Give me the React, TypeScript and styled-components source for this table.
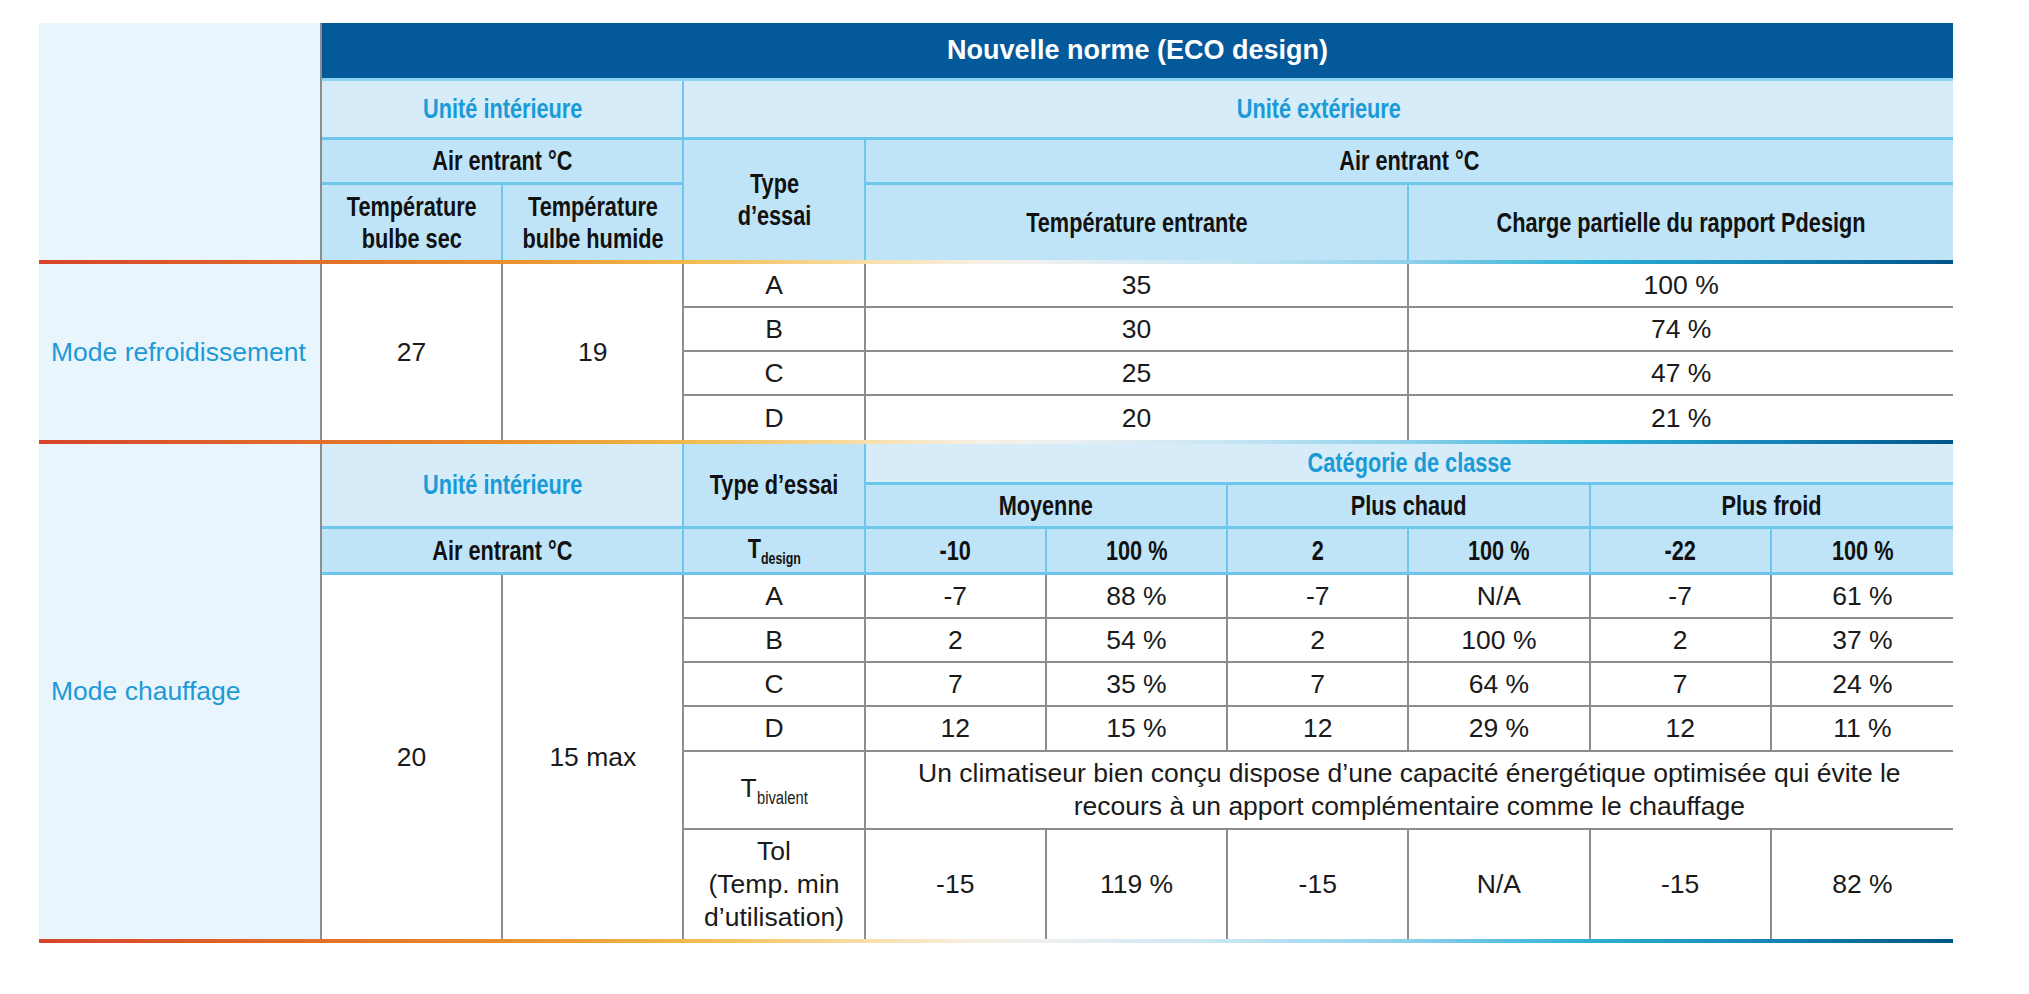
import React from "react";
import styled, { createGlobalStyle, css } from "styled-components";

const SANS = `"Liberation Sans", Arial, Helvetica, sans-serif`;

const HEAD_LINE = "#6ec6ec";
const GRID_LINE = "#8d8d8d";

const GlobalStyle = createGlobalStyle`
  html, body {
    margin: 0;
    padding: 0;
    background: #ffffff;
  }
  body {
    font-family: ${SANS};
  }
`;

const Page = styled.div`
  padding: 23px 0 0 39px;
`;

const Grid = styled.div`
  display: grid;
  width: 1914px;
  grid-template-columns: 283px repeat(9, 1fr);
  grid-template-rows:
    58px 59px 45px 75px 4px
    repeat(4, 44px) 4px
    41px 44px 46px repeat(3, 44px) 45px 78px 109px 4px;
`;

interface PlaceProps {
  $col: string;
  $row: string;
  $nr?: boolean;
  $nb?: boolean;
}

const placed = css<PlaceProps>`
  grid-column: ${(p) => p.$col};
  grid-row: ${(p) => p.$row};
  box-sizing: border-box;
  display: flex;
  align-items: center;
  justify-content: center;
  text-align: center;
  min-width: 0;
`;

const TitleCell = styled.div<PlaceProps>`
  ${placed};
  background: #04599a;
  border-bottom: 3px solid #8fd5f3;
  color: #ffffff;
  font-family: ${SANS};
  font-weight: 700;
  font-size: 27px;
`;

const HeadCell = styled.div<PlaceProps & { $light?: boolean; $blue?: boolean }>`
  ${placed};
  background: ${(p) => (p.$light ? "#d6ecf9" : "#bfe4f7")};
  color: ${(p) => (p.$blue ? "#1a9ad7" : "#111111")};
  border-right: ${(p) => (p.$nr ? "none" : `2px solid ${HEAD_LINE}`)};
  border-bottom: ${(p) => (p.$nb ? "none" : `3px solid ${HEAD_LINE}`)};
  font-family: ${SANS};
  font-weight: 700;
  font-size: 28px;
  line-height: 32px;
`;

/* the source uses a condensed Helvetica; no narrow face is installed, so squeeze it */
const Condensed = styled.span`
  display: inline-block;
  white-space: nowrap;
  transform: scaleX(0.775);
`;

const SideCell = styled.div<PlaceProps>`
  ${placed};
  justify-content: flex-start;
  padding-left: 12px;
  background: #e9f5fc;
  border-right: 2px solid ${GRID_LINE};
  color: #1d9ad6;
  font-family: ${SANS};
  font-size: 26.5px;
`;

const DataCell = styled.div<PlaceProps>`
  ${placed};
  background: #ffffff;
  border-right: ${(p) => (p.$nr ? "none" : `2px solid ${GRID_LINE}`)};
  border-bottom: ${(p) => (p.$nb ? "none" : `2px solid ${GRID_LINE}`)};
  color: #1a1a1a;
  font-family: ${SANS};
  font-size: 26.5px;
  line-height: 33px;
`;

const GradientLine = styled.div<{ $row: string }>`
  grid-column: 1 / 11;
  grid-row: ${(p) => p.$row};
  background: linear-gradient(
    90deg,
    #d6442a 0%,
    #e2702a 14.8%,
    #e98f2e 24.2%,
    #f1b94c 33.7%,
    #f8dfa8 43.2%,
    #f7efe2 49%,
    #eef0f0 52.6%,
    #c6e6f4 62.1%,
    #8ed0ea 71.6%,
    #2bb0d6 81.1%,
    #1784b8 90.5%,
    #005588 100%
  );
`;

const SubBold = styled.span`
  font-size: 16px;
  position: relative;
  top: 6px;
`;

const SubNarrow = styled.span`
  display: inline-block;
  font-size: 18px;
  transform: scaleX(0.82);
  transform-origin: left center;
  margin-right: -11px;
  position: relative;
  top: 7px;
`;

type HeadProps = React.ComponentProps<typeof HeadCell>;

function Head({ children, ...rest }: HeadProps) {
  return (
    <HeadCell {...rest}>
      <Condensed>{children}</Condensed>
    </HeadCell>
  );
}

const cooling = [
  ["A", "35", "100 %"],
  ["B", "30", "74 %"],
  ["C", "25", "47 %"],
  ["D", "20", "21 %"],
];

const heating = [
  ["A", "-7", "88 %", "-7", "N/A", "-7", "61 %"],
  ["B", "2", "54 %", "2", "100 %", "2", "37 %"],
  ["C", "7", "35 %", "7", "64 %", "7", "24 %"],
  ["D", "12", "15 %", "12", "29 %", "12", "11 %"],
];

const tdesign = ["-10", "100 %", "2", "100 %", "-22", "100 %"];
const tol = ["-15", "119 %", "-15", "N/A", "-15", "82 %"];

export default function App() {
  return (
    <Page>
      <GlobalStyle />
      <Grid>
        {/* en-tête */}
        <SideCell $col="1" $row="1 / 5" />
        <TitleCell $col="2 / 11" $row="1">
          Nouvelle norme (ECO design)
        </TitleCell>
        <Head $col="2 / 4" $row="2" $light $blue>
          Unité intérieure
        </Head>
        <Head $col="4 / 11" $row="2" $light $blue $nr>
          Unité extérieure
        </Head>
        <Head $col="2 / 4" $row="3">
          Air entrant °C
        </Head>
        <Head $col="4" $row="3 / 5" $nb>
          Type
          <br />
          d’essai
        </Head>
        <Head $col="5 / 11" $row="3" $nr>
          Air entrant °C
        </Head>
        <Head $col="2" $row="4" $nb>
          Température
          <br />
          bulbe sec
        </Head>
        <Head $col="3" $row="4" $nb>
          Température
          <br />
          bulbe humide
        </Head>
        <Head $col="5 / 8" $row="4" $nb>
          Température entrante
        </Head>
        <Head $col="8 / 11" $row="4" $nb $nr>
          Charge partielle du rapport Pdesign
        </Head>
        <GradientLine $row="5" />

        {/* refroidissement */}
        <SideCell $col="1" $row="6 / 10">
          Mode refroidissement
        </SideCell>
        <DataCell $col="2" $row="6 / 10" $nb>
          27
        </DataCell>
        <DataCell $col="3" $row="6 / 10" $nb>
          19
        </DataCell>
        {cooling.map((r, i) => {
          const row = String(6 + i);
          const last = i === cooling.length - 1;
          return (
            <React.Fragment key={r[0]}>
              <DataCell $col="4" $row={row} $nb={last}>
                {r[0]}
              </DataCell>
              <DataCell $col="5 / 8" $row={row} $nb={last}>
                {r[1]}
              </DataCell>
              <DataCell $col="8 / 11" $row={row} $nb={last} $nr>
                {r[2]}
              </DataCell>
            </React.Fragment>
          );
        })}
        <GradientLine $row="10" />

        {/* chauffage */}
        <SideCell $col="1" $row="11 / 20">
          Mode chauffage
        </SideCell>
        <Head $col="2 / 4" $row="11 / 13" $light $blue>
          Unité intérieure
        </Head>
        <Head $col="4" $row="11 / 13">
          Type d’essai
        </Head>
        <Head $col="5 / 11" $row="11" $light $blue $nr>
          Catégorie de classe
        </Head>
        <Head $col="5 / 7" $row="12">
          Moyenne
        </Head>
        <Head $col="7 / 9" $row="12">
          Plus chaud
        </Head>
        <Head $col="9 / 11" $row="12" $nr>
          Plus froid
        </Head>
        <Head $col="2 / 4" $row="13">
          Air entrant °C
        </Head>
        <Head $col="4" $row="13">
          T<SubBold>design</SubBold>
        </Head>
        {tdesign.map((v, i) => (
          <Head key={i} $col={String(5 + i)} $row="13" $nr={i === tdesign.length - 1}>
            {v}
          </Head>
        ))}

        <DataCell $col="2" $row="14 / 20" $nb>
          20
        </DataCell>
        <DataCell $col="3" $row="14 / 20" $nb>
          15 max
        </DataCell>
        {heating.map((r, i) => {
          const row = String(14 + i);
          return (
            <React.Fragment key={r[0]}>
              {r.map((v, j) => (
                <DataCell key={j} $col={String(4 + j)} $row={row} $nr={j === r.length - 1}>
                  {v}
                </DataCell>
              ))}
            </React.Fragment>
          );
        })}
        <DataCell $col="4" $row="18">
          <span>
            T<SubNarrow>bivalent</SubNarrow>
          </span>
        </DataCell>
        <DataCell $col="5 / 11" $row="18" $nr>
          Un climatiseur bien conçu dispose d’une capacité énergétique optimisée qui évite le
          <br />
          recours à un apport complémentaire comme le chauffage
        </DataCell>
        <DataCell $col="4" $row="19" $nb>
          Tol
          <br />
          (Temp. min
          <br />
          d’utilisation)
        </DataCell>
        {tol.map((v, i) => (
          <DataCell key={i} $col={String(5 + i)} $row="19" $nb $nr={i === tol.length - 1}>
            {v}
          </DataCell>
        ))}
        <GradientLine $row="20" />
      </Grid>
    </Page>
  );
}
